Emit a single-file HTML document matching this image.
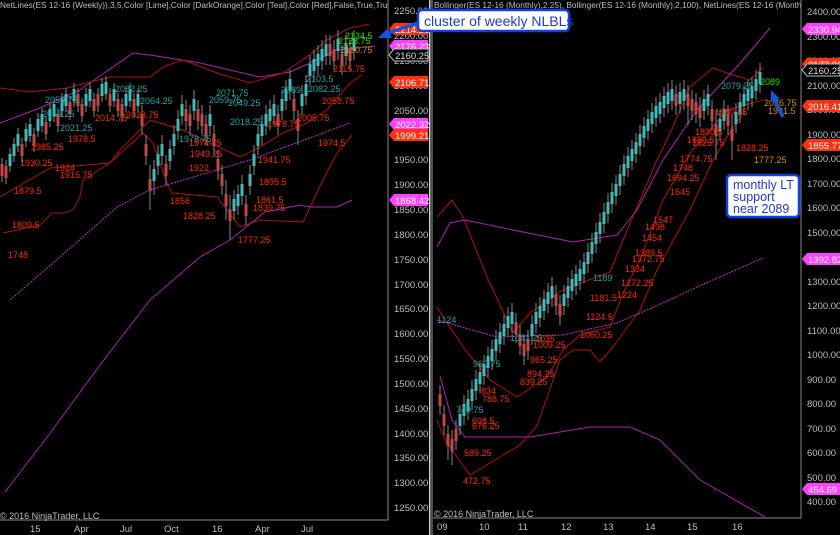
<!DOCTYPE html>
<html><head><meta charset="utf-8"><style>
html,body{margin:0;padding:0;background:#000;width:840px;height:535px;overflow:hidden}
svg{display:block}
text{font-family:"Liberation Sans",sans-serif}
.ax{fill:#bdbdbd;font-size:9.5px}
.l{font-size:9px}
.r{fill:#ff2a00}.t{fill:#1fa5a5}.o{fill:#e08a00}.g{fill:#22e000}
</style></head><body>
<svg width="840" height="535" viewBox="0 0 840 535" xmlns="http://www.w3.org/2000/svg">
<rect width="840" height="535" fill="#000"/>
<rect x="429" y="0" width="1.5" height="535" fill="#cfcfcf"/><rect x="431.5" y="0" width="1" height="535" fill="#9a9a9a"/>
<text x="0" y="8" class="ax" style="font-size:8.3px">NetLines(ES 12-16 (Weekly)),3,5,Color [Lime],Color [DarkOrange],Color [Teal],Color [Red],False,True,True), Bollin</text>
<text x="434" y="8" class="ax" style="font-size:8.3px">Bollinger(ES 12-16 (Monthly),2.25), Bollinger(ES 12-16 (Monthly),2,100), NetLines(ES 12-16 (Monthly),3,5</text>
<rect x="388" y="0" width="41" height="10" fill="#000"/>
<rect x="801" y="0" width="39" height="10" fill="#000"/>

<g fill="none" stroke-width="1">
<polyline stroke="#b020b0" points="0,123 40,108 80,90 133,53 150,55 200,63 260,77 290,72 317,60 337,50 357,48 375,46"/>
<polyline stroke="#b01010" points="0,88 30,92 67,88 110,77 150,77 163,67 183,60 217,73 250,83 283,73 307,57 327,40 350,28 370,24"/>
<polyline stroke="#b01010" points="0,197 50,168 110,163 120,150 150,120 183,130 240,157 260,147 283,133 307,123 327,110 350,83 362,75"/>
<polyline stroke="#b01010" points="3,233 40,225 52,213 63,213 73,210 80,197 83,180 110,163 143,133 153,143 167,183 172,193 217,197 240,227 260,220 303,222 323,180 337,153 352,135"/>
<polyline stroke="#c030c0" stroke-dasharray="2,1" points="10,300 53,263 117,207 150,190 250,160 350,123"/>
<polyline stroke="#b020b0" points="5,492 45,440 100,365 150,300 200,257 230,240 265,212 300,205 310,207 337,207 352,200"/>
</g>
<path stroke="#888" stroke-width="1" fill="none" d="M2 158V182M6 160V184M10 148V172M14 138V162M18 128V152M22 138V162M26 123V147M30 118V142M34 128V152M38 113V137M42 108V132M46 116V140M50 103V127M54 98V122M58 108V132M62 93V117M66 88V112M70 96V120M74 83V107M78 88V112M82 98V122M86 88V112M90 83V107M94 93V117M98 88V112M102 78V102M106 76V100M110 88V112M114 83V107M118 93V117M122 98V122M126 88V112M130 83V107M134 93V117M138 88V112M142 105V135M146 135V165M150 165V210M154 160V195M158 145V175M162 135V165M166 155V185M170 140V170M174 125V155M178 110V140M182 95V125M186 100V130M190 105V135M194 90V120M198 100V130M202 105V135M206 115V145M210 105V135M214 125V155M218 150V180M222 165V195M226 180V220M230 195V240M234 190V220M238 185V215M242 175V205M246 195V225M250 165V195M254 145V175M258 125V155M262 115V145M266 105V135M270 100V130M274 95V125M278 105V135M282 90V120M286 80V110M290 70V100M294 90V120M298 110V145M302 85V115M306 75V105M310 55V85M314 50V80M318 45V75M322 40V70M326 35V65M330 35V65M334 40V70M338 30V60M342 45V75M346 35V65M350 40V70M354 30V60"/>
<path stroke="#45b8b8" stroke-width="3" fill="none" d="M10 154V166M14 144V156M18 134V146M26 129V141M30 124V136M38 119V131M42 114V126M50 109V121M54 104V116M62 99V111M66 94V106M74 89V101M86 94V106M90 89V101M102 84V96M106 82V94M114 89V101M126 94V106M130 89V101M138 94V106M154 169V181M158 154V166M162 144V156M170 149V161M174 134V146M178 119V131M182 104V116M194 99V111M210 114V126M234 199V211M238 194V206M242 184V196M250 174V186M254 154V166M258 134V146M262 124V136M266 114V126M270 109V121M274 104V116M282 99V111M286 89V101M290 79V91M302 94V106M306 84V96M310 64V76M314 59V71M318 54V66M322 49V61M326 44V56M338 39V51M346 44V56M354 39V51"/>
<path stroke="#c04848" stroke-width="3" fill="none" d="M2 164V176M6 166V178M22 144V156M34 134V146M46 122V134M58 114V126M70 102V114M78 94V106M82 104V116M94 99V111M98 94V106M110 94V106M118 99V111M122 104V116M134 99V111M142 114V126M146 144V156M150 179V191M166 164V176M186 109V121M190 114V126M198 109V121M202 114V126M206 124V136M214 134V146M218 159V171M222 174V186M226 194V206M230 209V221M246 204V216M278 114V126M294 99V111M298 119V131M330 44V56M334 49V61M342 54V66M350 49V61"/>
<g class="l">
<text x="14" y="194" class="r">1879.5</text>
<text x="12" y="228" class="r">1809.5</text>
<text x="8" y="258" class="r">1748</text>
<text x="20" y="166" class="r">1930.25</text>
<text x="55" y="171" class="r">1924</text>
<text x="60" y="178" class="r">1915.75</text>
<text x="31" y="150" class="r">1985.25</text>
<text x="68" y="142" class="r">1978.5</text>
<text x="95" y="121" class="r">2014.75</text>
<text x="45" y="103" class="t">2059.75</text>
<text x="42" y="117" class="t">2053.25</text>
<text x="60" y="131" class="t">2021.25</text>
<text x="115" y="92" class="t">2082.25</text>
<text x="140" y="104" class="t">2064.25</text>
<text x="126" y="118" class="r">2023.75</text>
<text x="216" y="96" class="t">2071.75</text>
<text x="209" y="103" class="t">2059.75</text>
<text x="228" y="106" class="t">2049.25</text>
<text x="230" y="125" class="t">2018.25</text>
<text x="179" y="142" class="t">1978.75</text>
<text x="189" y="146" class="r">1974.75</text>
<text x="190" y="157" class="r">1949.25</text>
<text x="189" y="171" class="r">1922</text>
<text x="170" y="204" class="r">1856</text>
<text x="183" y="219" class="r">1828.25</text>
<text x="258" y="163" class="r">1941.75</text>
<text x="259" y="185" class="r">1895.5</text>
<text x="256" y="203" class="r">1861.5</text>
<text x="253" y="211" class="r">1839.75</text>
<text x="238" y="243" class="r">1777.25</text>
<text x="267" y="127" class="r">1978.75</text>
<text x="281" y="93" class="t">2089</text>
<text x="306" y="82" class="t">2103.5</text>
<text x="308" y="92" class="t">2082.25</text>
<text x="322" y="104" class="r">2058.75</text>
<text x="297" y="121" class="r">2005.75</text>
<text x="318" y="146" class="r">1974.5</text>
<text x="333" y="72" class="r">2115.75</text>
<text x="340" y="53" class="o">2160.75</text>
<text x="338" y="44" class="g">2128.75</text>
<text x="345" y="39" class="g">2134.5</text>
</g>
<line x1="388" y1="0" x2="388" y2="520" stroke="#888"/>
<line x1="0" y1="520" x2="388" y2="520" stroke="#888"/>
<g class="ax">
<text x="394" y="14">2250.00</text><text x="394" y="39">2200.00</text><text x="394" y="64">2150.00</text><text x="394" y="89">2100.00</text><text x="394" y="114">2050.00</text><text x="394" y="138">2000.00</text><text x="394" y="163">1950.00</text><text x="394" y="188">1900.00</text><text x="394" y="213">1850.00</text><text x="394" y="238">1800.00</text><text x="394" y="263">1750.00</text><text x="394" y="288">1700.00</text><text x="394" y="312">1650.00</text><text x="394" y="337">1600.00</text><text x="394" y="362">1550.00</text><text x="394" y="387">1500.00</text><text x="394" y="412">1450.00</text><text x="394" y="437">1400.00</text><text x="394" y="461">1350.00</text><text x="394" y="486">1300.00</text><text x="394" y="511">1250.00</text>
<text x="30" y="532">15</text><text x="74" y="532">Apr</text><text x="120" y="532">Jul</text><text x="164" y="532">Oct</text><text x="212" y="532">16</text><text x="255" y="532">Apr</text><text x="301" y="532">Jul</text>
<text x="0" y="519" style="font-size:9px">© 2016 NinjaTrader, LLC</text>
</g>
<g style="font-size:9.5px">
<path d="M389 29l5 -6h34v12h-34z" fill="#ff3010"/><text x="395" y="33" fill="#fff">2214.21</text>
<path d="M389 46l5 -6h34v12h-34z" fill="#ff40ff"/><text x="395" y="50" fill="#fff">2176.23</text>
<path d="M389 55l5 -6h34v12h-34z" fill="#000" stroke="#bbb"/><text x="395" y="59" fill="#ddd">2160.25</text>
<path d="M389 82l5 -6h34v12h-34z" fill="#ff3010"/><text x="395" y="86" fill="#fff">2106.71</text>
<path d="M389 124l5 -6h34v12h-34z" fill="#ff40ff"/><text x="395" y="128" fill="#fff">2022.32</text>
<path d="M389 135l5 -6h34v12h-34z" fill="#ff3010"/><text x="395" y="139" fill="#fff">1999.21</text>
<path d="M389 200l5 -6h34v12h-34z" fill="#ff40ff"/><text x="395" y="204" fill="#fff">1868.42</text>
</g>

<g fill="none" stroke-width="1">
<polyline stroke="#b01010" points="437,217 452,200 463,217 487,277 513,333 530,313 563,290 597,277 610,272 623,240 640,200 657,160 673,127 690,87 713,68 727,73 750,80 763,67"/>
<polyline stroke="#b01010" points="437,307 463,347 490,380 517,397 547,377 563,350 580,335 610,327 623,293 640,260 663,200 690,153 727,110 763,100"/>
<polyline stroke="#b01010" points="437,420 445,440 470,475 520,445 537,426 560,360 573,350 590,350 600,362 613,347 640,310 657,270 690,210 713,160 727,137 743,113"/>
<polyline stroke="#b020b0" points="437,247 450,223 465,220 513,230 573,242 617,235 637,210 663,160 697,110 743,60 770,28"/>
<polyline stroke="#c030c0" stroke-dasharray="2,1" points="437,320 497,337 563,335 617,323 663,303 697,287 763,258"/>
<polyline stroke="#b020b0" points="440,376 452,420 465,437 530,437 590,427 630,427 660,440 700,480 765,517"/>
</g>
<path stroke="#888" stroke-width="1" fill="none" d="M440 385V415M444 405V435M448 425V460M452 430V465M456 420V450M460 405V435M464 395V425M468 390V420M472 380V410M476 370V400M480 363V393M484 355V385M488 347V377M492 340V370M496 330V360M500 323V353M504 315V345M508 307V337M512 303V333M516 313V343M520 325V355M524 335V365M528 330V360M532 315V345M536 303V333M540 297V327M544 290V320M548 283V313M552 277V307M556 285V315M560 295V325M564 285V315M568 277V307M572 270V300M576 265V295M580 260V290M584 253V283M588 243V273M592 233V263M596 223V253M600 213V243M604 203V233M608 193V223M612 183V213M616 175V205M620 165V195M624 155V185M628 147V177M632 140V170M636 133V163M640 125V155M644 117V147M648 110V140M652 103V133M656 97V127M660 93V123M664 87V117M668 83V113M672 80V110M676 85V115M680 83V113M684 80V110M688 85V125M692 90V120M696 93V123M700 97V127M704 90V120M708 85V115M712 100V130M716 110V160M720 110V140M724 100V130M728 105V135M732 115V160M736 103V133M740 93V123M744 85V115M748 80V110M752 77V107M756 70V100M760 63V93"/>
<path stroke="#45b8b8" stroke-width="3" fill="none" d="M460 414V426M464 404V416M468 399V411M472 389V401M476 379V391M480 372V384M484 364V376M488 356V368M492 349V361M496 339V351M500 332V344M504 324V336M508 316V328M512 312V324M532 324V336M536 312V324M540 306V318M544 299V311M548 292V304M552 286V298M564 294V306M568 286V298M572 279V291M576 274V286M580 269V281M584 262V274M588 252V264M592 242V254M596 232V244M600 222V234M604 212V224M608 202V214M612 192V204M616 184V196M620 174V186M624 164V176M628 156V168M632 149V161M636 142V154M640 134V146M644 126V138M648 119V131M652 112V124M656 106V118M660 102V114M664 96V108M668 92V104M672 89V101M680 92V104M684 89V101M704 99V111M708 94V106M720 119V131M724 109V121M736 112V124M740 102V114M744 94V106M748 89V101M752 86V98M756 79V91M760 72V84"/>
<path stroke="#c04848" stroke-width="3" fill="none" d="M440 394V406M444 414V426M448 434V446M452 439V451M456 429V441M516 322V334M520 334V346M524 344V356M528 339V351M556 294V306M560 304V316M676 94V106M688 94V106M692 99V111M696 102V114M700 106V118M712 109V121M716 124V136M728 114V126M732 129V141"/>
<g class="l">
<text x="437" y="323" class="t">1124</text>
<text x="456" y="413" class="t">740.75</text>
<text x="473" y="367" class="t">960.75</text>
<text x="510" y="341" class="t">1041.25</text>
<text x="593" y="281" class="t">1189</text>
<text x="472" y="424" class="r">698.5</text>
<text x="472" y="429" class="r">676.25</text>
<text x="464" y="456" class="r">589.25</text>
<text x="463" y="484" class="r">472.75</text>
<text x="481" y="394" class="r">834</text>
<text x="482" y="402" class="r">788.75</text>
<text x="527" y="377" class="r">894.25</text>
<text x="520" y="385" class="r">839.25</text>
<text x="530" y="363" class="r">965.25</text>
<text x="533" y="348" class="r">1009.25</text>
<text x="535" y="342" class="r">1035</text>
<text x="580" y="338" class="r">1060.25</text>
<text x="586" y="320" class="r">1124.5</text>
<text x="590" y="301" class="r">1181.5</text>
<text x="617" y="298" class="r">1224</text>
<text x="621" y="286" class="r">1272.25</text>
<text x="625" y="272" class="r">1334</text>
<text x="632" y="262" class="r">1372.75</text>
<text x="635" y="256" class="r">1389.5</text>
<text x="642" y="241" class="r">1454</text>
<text x="645" y="230" class="r">1498</text>
<text x="653" y="223" class="r">1547</text>
<text x="670" y="195" class="r">1645</text>
<text x="667" y="181" class="r">1694.25</text>
<text x="673" y="171" class="r">1748</text>
<text x="680" y="162" class="r">1774.75</text>
<text x="692" y="146" class="r">1826.75</text>
<text x="687" y="143" class="r">1850.5</text>
<text x="695" y="135" class="r">1890.5</text>
<text x="715" y="115" class="r">1980.25</text>
<text x="736" y="151" class="r">1828.25</text>
<text x="754" y="163" class="o">1777.25</text>
<text x="764" y="106" class="o">2026.75</text>
<text x="768" y="114" class="o">1991.5</text>
<text x="721" y="89" class="t">2079.25</text>
<text x="760" y="85" class="g">2089</text>
</g>
<line x1="801" y1="0" x2="801" y2="518" stroke="#888"/>
<line x1="433" y1="518" x2="801" y2="518" stroke="#888"/>
<g class="ax">
<text x="807" y="15">2400.00</text><text x="807" y="40">2300.00</text><text x="807" y="64">2200.00</text><text x="807" y="89">2100.00</text><text x="807" y="113">2000.00</text><text x="807" y="138">1900.00</text><text x="807" y="162">1800.00</text><text x="807" y="187">1700.00</text><text x="807" y="211">1600.00</text><text x="807" y="236">1500.00</text><text x="807" y="260">1400.00</text><text x="807" y="285">1300.00</text><text x="807" y="309">1200.00</text><text x="807" y="334">1100.00</text><text x="807" y="358">1000.00</text><text x="807" y="383">900.00</text><text x="807" y="407">800.00</text><text x="807" y="432">700.00</text><text x="807" y="456">600.00</text><text x="807" y="481">500.00</text><text x="807" y="505">400.00</text>
<text x="437" y="530">09</text><text x="479" y="530">10</text><text x="518" y="530">11</text><text x="561" y="530">12</text><text x="603" y="530">13</text><text x="645" y="530">14</text><text x="687" y="530">15</text><text x="732" y="530">16</text>
<text x="434" y="517" style="font-size:9px">© 2016 NinjaTrader, LLC</text>
</g>
<g style="font-size:9.5px">
<path d="M802 29l5 -6h33v12h-33z" fill="#ff40ff"/><text x="808" y="33" fill="#fff">2330.94</text>
<path d="M802 64l5 -6h33v12h-33z" fill="#ff3010"/><text x="808" y="68" fill="#fff">2177.06</text>
<path d="M802 70l5 -6h33v12h-33z" fill="#000" stroke="#bbb"/><text x="808" y="74" fill="#ddd">2160.25</text>
<path d="M802 106l5 -6h33v12h-33z" fill="#ff3010"/><text x="808" y="110" fill="#fff">2016.41</text>
<path d="M802 145l5 -6h33v12h-33z" fill="#ff3010"/><text x="808" y="149" fill="#fff">1855.77</text>
<path d="M802 259l5 -6h33v12h-33z" fill="#ff40ff"/><text x="808" y="263" fill="#fff">1392.82</text>
<path d="M802 489l5 -6h33v12h-33z" fill="#ff40ff"/><text x="808" y="493" fill="#fff">454.69</text>
</g>

<rect x="418" y="10" width="151" height="21" rx="4" fill="#fff" stroke="#1040e0" stroke-width="2.5"/>
<text x="424" y="26" fill="#2038d0" style="font-size:14px">cluster of weekly NLBLs</text>
<path d="M418 23L388 33" stroke="#1a50e0" stroke-width="3.5"/>
<path d="M378 38l10 -10l4 10z" fill="#1a50e0"/>
<rect x="727" y="175" width="72" height="42" rx="4" fill="#fff" stroke="#1040e0" stroke-width="2.5"/>
<text x="733" y="189" fill="#2038d0" style="font-size:12.5px">monthly LT</text>
<text x="733" y="201" fill="#2038d0" style="font-size:12.5px">support</text>
<text x="733" y="213" fill="#2038d0" style="font-size:12.5px">near 2089</text>
<path d="M783 117L775 100" stroke="#1a50e0" stroke-width="3.5"/>
<path d="M771 90l9 9l-9 3z" fill="#1a50e0"/>
</svg>
</body></html>
